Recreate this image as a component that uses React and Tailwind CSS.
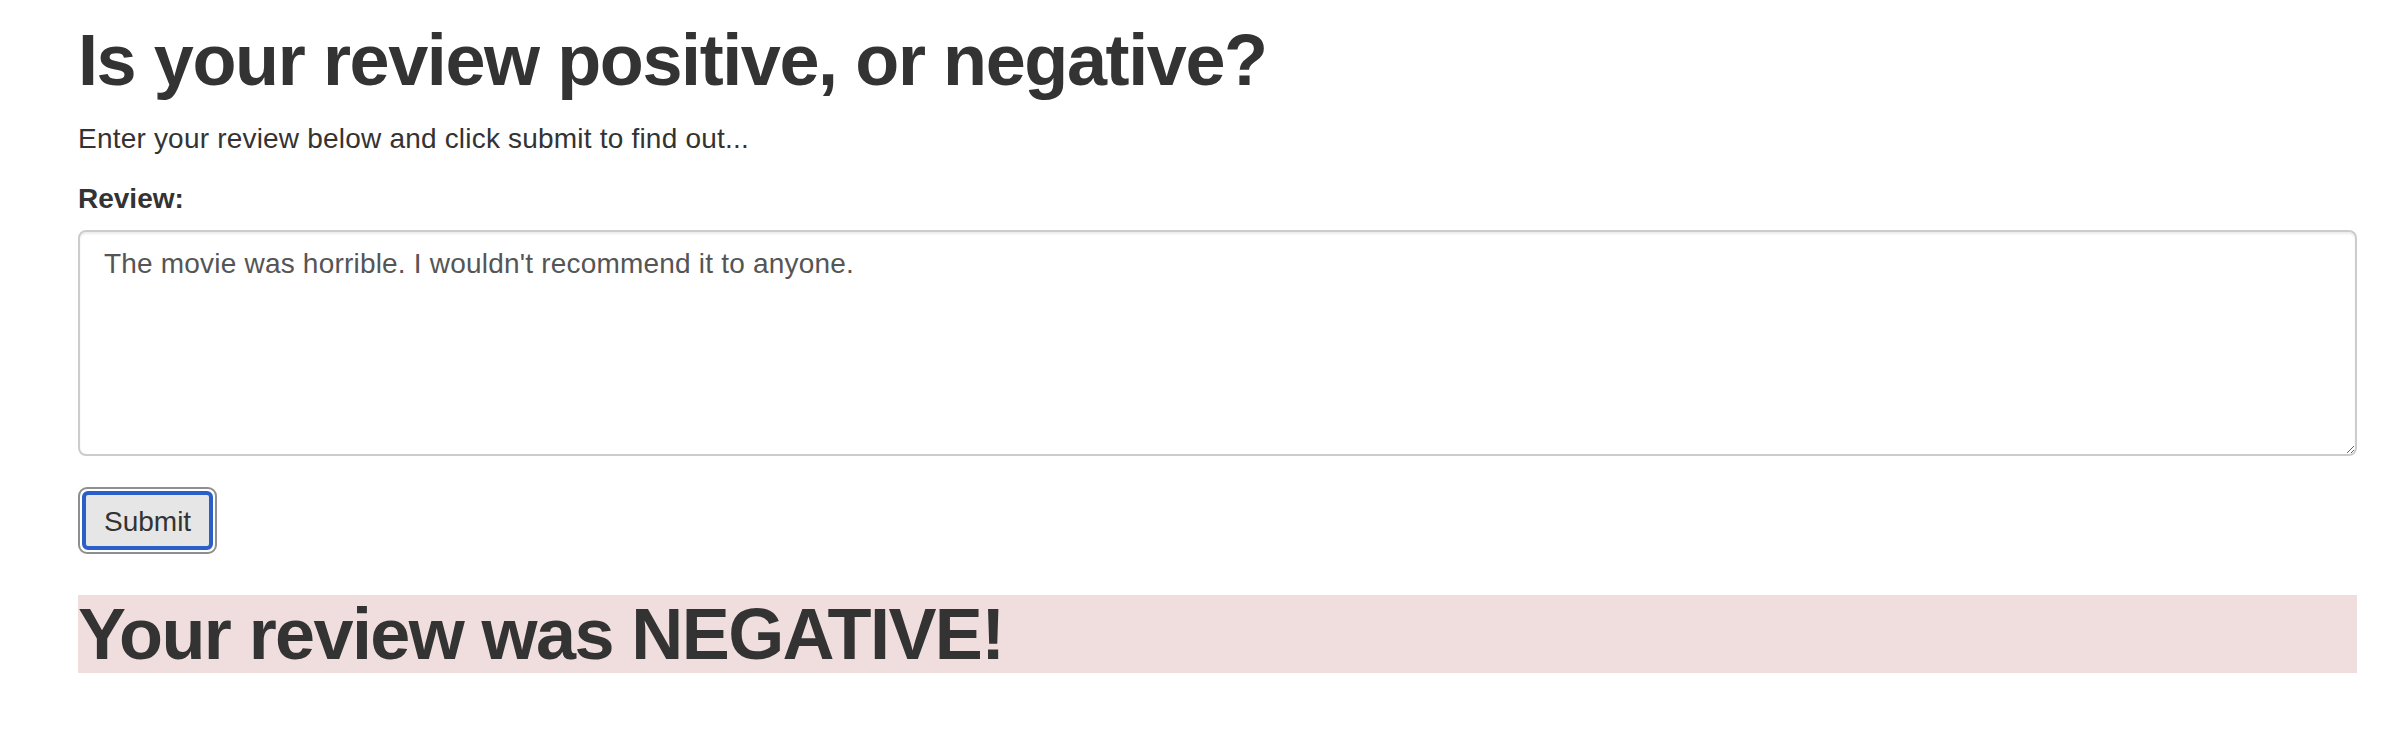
import { useState } from 'react'

export default function App() {
  const [review, setReview] = useState("The movie was horrible. I wouldn't recommend it to anyone.")

  return (
    <div
      className="min-h-[740px] bg-white pl-[78px] pr-[33px] pt-[21px] text-[#333]"
      style={{ fontFamily: '"Liberation Sans", Arial, sans-serif' }}
    >
      <h1 className="mb-[19px] text-[72px] font-bold leading-[79px] tracking-[-1.4px]">
        Is your review positive, or negative?
      </h1>
      <p className="mb-[20px] text-[28px] leading-[40px] tracking-[0.2px]">
        Enter your review below and click submit to find out...
      </p>

      <form onSubmit={(e) => e.preventDefault()}>
        <label htmlFor="review" className="mb-[11px] block text-[28px] font-bold leading-[40px]">
          Review:
        </label>
        <textarea
          id="review"
          value={review}
          onChange={(e) => setReview(e.target.value)}
          className="block h-[226px] w-full rounded-[8px] border-2 border-[#ccc] bg-white px-[24px] pt-[12px] text-[28px] leading-[40px] tracking-[0.2px] text-[#555] shadow-[inset_0_2px_2px_rgba(0,0,0,0.075)] outline-none"
        />

        <button
          type="submit"
          className="mt-[31px] block rounded-[9px] border-2 border-[#8f8f8f] bg-white p-[2px]"
        >
          <span className="block rounded-[6px] border-[4px] border-[#2a5fc9] bg-[#e6e6e6] px-[18px] pt-[2px] text-[28px] leading-[49px] text-[#333]">
            Submit
          </span>
        </button>
      </form>

      <div className="mt-[41px] h-[78px] bg-[#f0dede]">
        <h1 className="text-[72px] font-bold leading-[79px] tracking-[-1.6px]">
          Your review was NEGATIVE!
        </h1>
      </div>
    </div>
  )
}
